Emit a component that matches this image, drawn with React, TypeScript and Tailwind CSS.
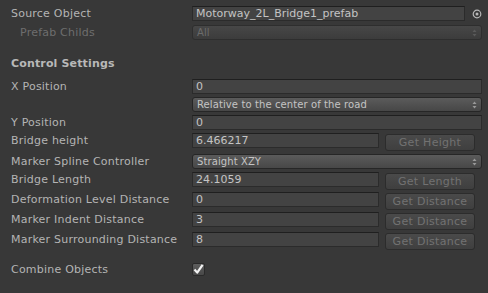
import React from "react";

const font = { fontFamily: '"DejaVu Sans", Verdana, sans-serif' };

function Field({ value, className = "" }: { value: string; className?: string }) {
  return (
    <div
      className={`h-[15px] bg-[#434343] border border-[#2b2b2b] border-t-[#1f1f1f] pl-[3px] text-[11px] leading-[13px] text-[#c4c4c4] whitespace-nowrap overflow-hidden ${className}`}
    >
      {value}
    </div>
  );
}

function Arrows({ dim }: { dim?: boolean }) {
  return (
    <svg width="5" height="8" viewBox="0 0 5 8" className="shrink-0">
      <path d="M2.5 0.5 L4.5 3 L0.5 3 Z" fill={dim ? "#5a5a5a" : "#9a9a9a"} />
      <path d="M2.5 7.5 L4.5 5 L0.5 5 Z" fill={dim ? "#5a5a5a" : "#9a9a9a"} />
    </svg>
  );
}

function Dropdown({ value, dim }: { value: string; dim?: boolean }) {
  return (
    <div
      className={`h-[15px] w-[290px] rounded-[3px] border flex items-center justify-between pl-[4px] pr-[4px] text-[10px] tracking-[0.1px] whitespace-nowrap ${
        dim
          ? "border-[#2e2e2e] bg-gradient-to-b from-[#474747] to-[#3c3c3c] text-[#6c6c6c]"
          : "border-[#262626] bg-gradient-to-b from-[#5b5b5b] to-[#474747] text-[#c4c4c4]"
      }`}
    >
      <span className="leading-[13px]">{value}</span>
      <Arrows dim={dim} />
    </div>
  );
}

function Button({ label }: { label: string }) {
  return (
    <div className="mt-[1px] ml-[6px] h-[17px] w-[90px] rounded-[3px] border border-[#2c2c2c] bg-gradient-to-b from-[#4a4a4a] to-[#3f3f3f] flex items-center justify-center text-[11px] tracking-[0.3px] leading-[15px] text-[#727272] whitespace-nowrap">
      {label}
    </div>
  );
}

function Label({ text, className = "" }: { text: string; className?: string }) {
  return (
    <div className={`w-[192px] shrink-0 pl-[11px] text-[11px] tracking-[0.22px] leading-[15px] text-[#b4b4b4] whitespace-nowrap ${className}`}>
      {text}
    </div>
  );
}

function FieldRow({ label, value, button, mt }: { label: string; value: string; button?: string; mt: string }) {
  return (
    <div className={`flex items-start ${mt}`}>
      <Label text={label} />
      {button ? (
        <>
          <Field value={value} className="w-[187px]" />
          <Button label={button} />
        </>
      ) : (
        <Field value={value} className="w-[290px]" />
      )}
    </div>
  );
}

export default function App() {
  return (
    <div className="w-[488px] h-[293px] bg-[#383838] overflow-hidden pt-[6px]" style={font}>
      <div className="flex items-start">
        <Label text="Source Object" />
        <Field value="Motorway_2L_Bridge1_prefab" className="w-[273px]" />
        <div className="ml-[7px] h-[15px] flex items-center">
          <svg width="10" height="10" viewBox="0 0 10 10">
            <circle cx="5" cy="5" r="3.8" fill="none" stroke="#b8b8b8" strokeWidth="1.2" />
            <circle cx="5" cy="5" r="1.5" fill="#b8b8b8" />
          </svg>
        </div>
      </div>
      <div className="flex items-start mt-[4px]">
        <Label text="Prefab Childs" className="pl-[20px] !text-[#6e6e6e]" />
        <Dropdown value="All" dim />
      </div>

      <div className="mt-[16px] pl-[11px] text-[11px] tracking-[0.15px] leading-[15px] font-bold text-[#b8b8b8]">
        Control Settings
      </div>

      <FieldRow label="X Position" value="0" mt="mt-[8px]" />
      <div className="flex items-start mt-[3px]">
        <Label text="" />
        <Dropdown value="Relative to the center of the road" />
      </div>
      <FieldRow label="Y Position" value="0" mt="mt-[3px]" />
      <FieldRow label="Bridge height" value="6.466217" button="Get Height" mt="mt-[3px]" />
      <div className="flex items-start mt-[3px]">
        <Label text="Marker Spline Controller" />
        <Dropdown value="Straight XZY" />
      </div>
      <FieldRow label="Bridge Length" value="24.1059" button="Get Length" mt="mt-[3px]" />
      <FieldRow label="Deformation Level Distance" value="0" button="Get Distance" mt="mt-[2px]" />
      <FieldRow label="Marker Indent Distance" value="3" button="Get Distance" mt="mt-[2px]" />
      <FieldRow label="Marker Surrounding Distance" value="8" button="Get Distance" mt="mt-[2px]" />

      <div className="flex items-center mt-[13px] h-[13px]">
        <Label text="Combine Objects" />
        <div className="w-[13px] h-[13px] rounded-[2px] border border-[#2a2a2a] bg-gradient-to-b from-[#5e5e5e] to-[#484848] flex items-center justify-center">
          <svg width="11" height="11" viewBox="0 0 11 11">
            <path d="M1.5 5.5 L4.2 8.6 L9.6 0.8" fill="none" stroke="#f2f2f2" strokeWidth="2.2" strokeLinejoin="round" />
          </svg>
        </div>
      </div>
    </div>
  );
}
